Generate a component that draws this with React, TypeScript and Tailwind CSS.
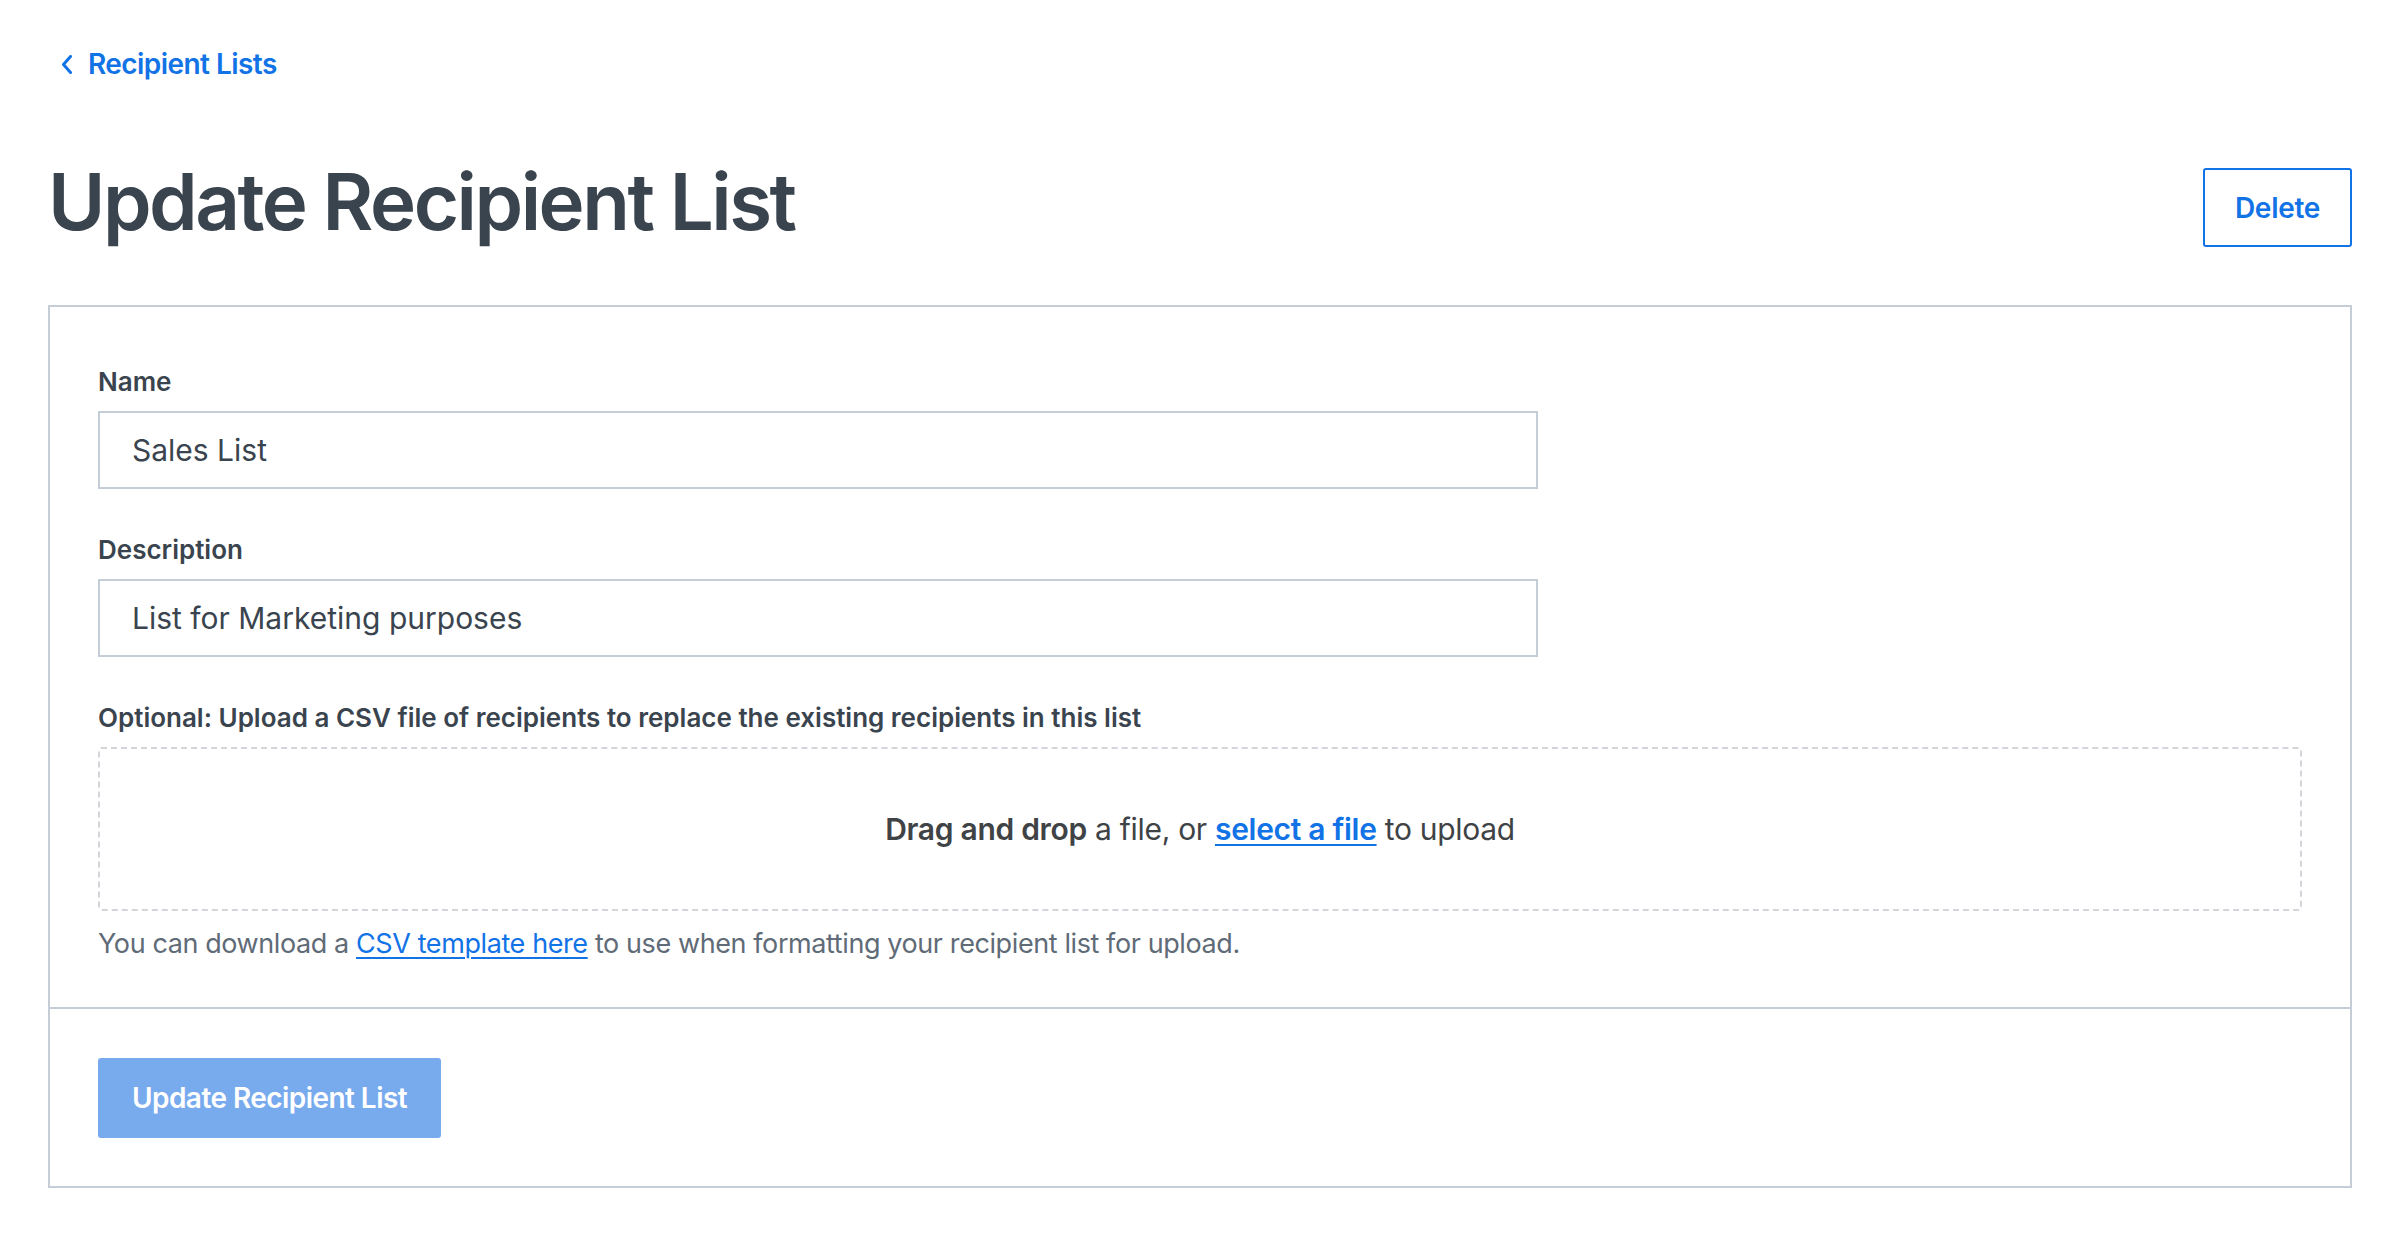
import React from "react";

export default function App() {
  return (
    <div
      className="min-h-screen bg-white px-12 pt-[44px] pb-10"
      style={{ fontFamily: "Inter, 'Noto Sans', 'Liberation Sans', sans-serif" }}
    >
      <a href="#" className="flex h-[40px] items-center text-[28px] font-semibold tracking-[-0.02em] text-[#1273e6] no-underline">
        <svg width="12" height="19" viewBox="0 0 12 19" className="ml-[13px] mr-[15px]" fill="none">
          <polyline points="9.5,1.5 2.5,9.5 9.5,17.5" stroke="#1273e6" strokeWidth="3" strokeLinecap="round" strokeLinejoin="round" />
        </svg>
        Recipient Lists
      </a>

      <div className="mt-[70px] flex items-start justify-between">
        <h1 className="text-[78px] leading-[96px] font-semibold tracking-[-0.032em] text-[#3a444e]">
          Update Recipient List
        </h1>
        <button className="mt-[14px] h-[79px] w-[149px] rounded-[3px] border-2 border-[#1273e6] bg-white text-[28px] font-semibold tracking-[-0.01em] text-[#1273e6]">
          Delete
        </button>
      </div>

      <div className="mt-[55px] border-2 border-[#c5ced6] bg-white">
        <div className="px-[48px] pt-[57px] pb-[43px]">
          <label className="mb-[11px] block text-[26px] leading-[36px] font-semibold text-[#3a444e]">Name</label>
          <input
            readOnly
            value="Sales List"
            className="block h-[78px] w-[1440px] border-2 border-[#c5ced6] px-[32px] text-[30px] text-[#3a444e] outline-none"
          />

          <label className="mt-[43px] mb-[11px] block text-[26px] leading-[36px] font-semibold text-[#3a444e]">Description</label>
          <input
            readOnly
            value="List for Marketing purposes"
            className="block h-[78px] w-[1440px] border-2 border-[#c5ced6] px-[32px] text-[30px] text-[#3a444e] outline-none"
          />

          <label className="mt-[43px] mb-[11px] block text-[26px] leading-[36px] font-semibold text-[#3a444e]">
            Optional: Upload a CSV file of recipients to replace the existing recipients in this list
          </label>
          <div className="flex h-[164px] items-center justify-center rounded-[3px] border-2 border-dashed border-[#d2d6db] text-[30px] tracking-[-0.01em] text-[#404346]">
            <span>
              <span className="font-semibold">Drag and drop</span> a file, or{" "}
              <a href="#" className="font-semibold text-[#1273e6] underline decoration-2 underline-offset-4">
                select a file
              </a>{" "}
              to upload
            </span>
          </div>
          <p className="mt-[13px] text-[27px] leading-[40px] tracking-[-0.015em] text-[#5f6b77]">
            You can download a{" "}
            <a href="#" className="text-[#1273e6] underline decoration-2 underline-offset-4">
              CSV template here
            </a>{" "}
            to use when formatting your recipient list for upload.
          </p>
        </div>
        <div className="border-t-2 border-[#c5ced6] px-[48px] pt-[49px] pb-[48px]">
          <button className="h-[80px] rounded-[3px] bg-[#78aaee] px-[34px] text-[28px] font-semibold tracking-[-0.02em] text-white">
            Update Recipient List
          </button>
        </div>
      </div>
    </div>
  );
}
